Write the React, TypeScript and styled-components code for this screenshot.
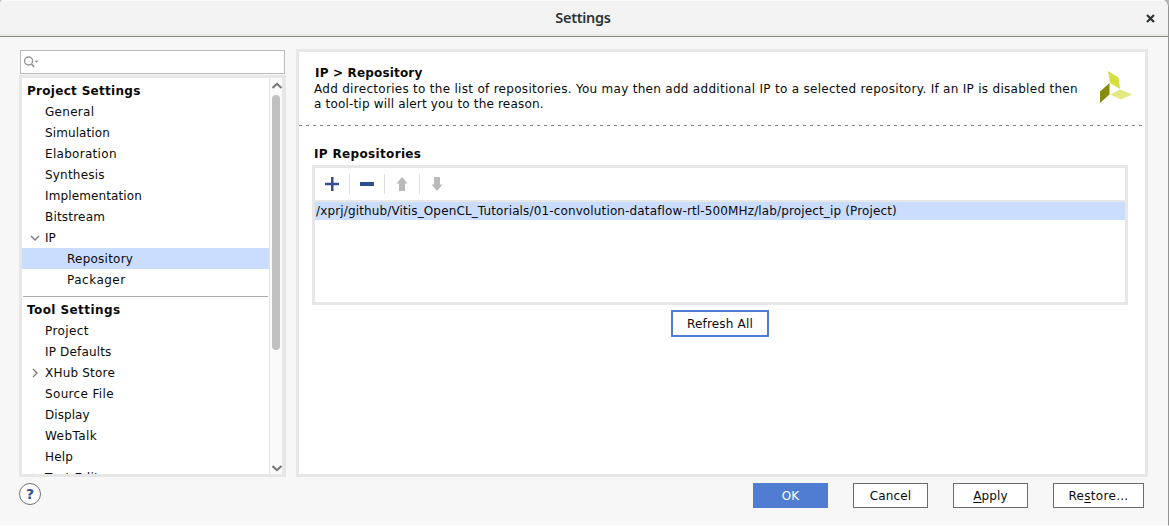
import React from 'react';
import styled, { createGlobalStyle } from 'styled-components';

const Global = createGlobalStyle`
  * { box-sizing: border-box; }
  body { margin: 0; background: #b5b5b5; overflow: hidden; }
`;

const Dialog = styled.div`
  position: relative;
  display: flex;
  flex-direction: column;
  width: 1169px;
  height: 526px;
  overflow: hidden;
  background: #f7f7f7;
  border-right: 1px solid #939393;
  border-bottom: 1px solid #fdfdfd;
  border-top-left-radius: 4px;
  border-top-right-radius: 7px;
  font: 12px 'DejaVu Sans', sans-serif;
  font-variant-ligatures: none;
  color: #0a0a0a;
  white-space: pre;
`;

const TitleBar = styled.header`
  display: flex;
  flex: none;
  align-items: center;
  height: 37px;
  padding: 0 13px 0 0;
  background: #f3f3f3;
  border-top: 1px solid #fbfbfb;
  border-bottom: 1px solid #8b8c85;
  box-shadow: inset 0 -2px 0 #e9e9e8;
`;

const Title = styled.h1`
  flex: 1;
  margin: 0;
  padding: 0 0 4px 20px;
  text-align: center;
  font: 600 14.5px/20px 'Noto Sans', sans-serif;
  letter-spacing: -0.3px;
  color: #2e3436;
`;

const Columns = styled.div`
  display: flex;
  flex: none;
  gap: 10px;
  height: 440px;
  padding: 12px 20px 0 19px;
`;

const Sidebar = styled.aside`
  display: flex;
  flex-direction: column;
  width: 267px;
  padding-top: 1px;
`;

const Search = styled.div`
  display: flex;
  flex: none;
  align-items: center;
  height: 24px;
  margin: 0 1px 1px;
  padding-left: 3px;
  background: #fff;
  border: 1px solid #b9b9b9;
`;

const TreeFrame = styled.div`
  display: flex;
  flex: none;
  height: 402px;
  border: 3px solid #e7e7e7;
  border-right-width: 4px;
  background: #fff;
`;

const Tree = styled.div`
  flex: 1;
  padding-top: 2px;
  overflow: hidden;
`;

const Row = styled.div<{ $level: number; $selected?: boolean }>`
  display: flex;
  align-items: center;
  height: 21px;
  padding-left: ${p => [5, 7, 45][p.$level]}px;
  font-weight: ${p => (p.$level === 0 ? 'bold' : 'normal')};
  background: ${p => (p.$selected ? '#cbddff' : 'transparent')};
`;

const Toggle = styled.span`
  display: flex;
  width: 16px;
  height: 12px;
`;

const Label = styled.span<{ $track?: number }>`
  letter-spacing: ${p => p.$track ?? 0}px;
`;

const Separator = styled.hr`
  height: 1px;
  margin: 6px 1px 2px;
  border: 0;
  background: #adadad;
`;

const ScrollBar = styled.div`
  display: flex;
  flex-direction: column;
  justify-content: space-between;
  width: 13px;
  padding: 2px 0 0 2px;
  border-left: 1px solid #e3e3e3;
  background: #fafafa;
`;

const Thumb = styled.div`
  width: 8px;
  height: 255px;
  margin: 3px 0 auto;
  border-radius: 4px;
  background: #c1c1c1;
`;

const Panel = styled.main`
  width: 852px;
  height: 428px;
  border: 3px solid #e7e7e7;
  background: #fff;
`;

const Intro = styled.section`
  display: flex;
  justify-content: space-between;
  height: 73px;
  padding: 13px 13px 0 15px;
`;

const Heading = styled.h2`
  margin: 0;
  padding-left: 1px;
  font-size: 12px;
  line-height: 16px;
  letter-spacing: 0.17px;
`;

const Paragraph = styled.p`
  margin: 1px 0 0;
  line-height: 15px;
`;

const Logo = styled.svg`
  margin-top: 6px;
`;

const Dashes = styled.div`
  height: 1px;
  width: 843px;
  background: repeating-linear-gradient(90deg, #858585 0 3px, transparent 3px 7px);
`;

const Repositories = styled.section`
  display: flex;
  flex-direction: column;
  align-items: center;
  padding: 21px 17px 0 13px;
`;

const SectionTitle = styled.h2`
  align-self: flex-start;
  margin: 0 0 3px 2px;
  font-size: 12px;
  line-height: 15px;
  letter-spacing: 0.34px;
`;

const Table = styled.div`
  width: 816px;
  height: 140px;
  border: 3px solid #e7e7e7;
`;

const Toolbar = styled.div`
  display: flex;
  align-items: center;
  height: 34px;
  border-bottom: 2px solid #e7e7e7;
`;

const Tool = styled.span`
  display: flex;
  align-items: center;
  justify-content: center;
  width: 35px;
  height: 20px;
  &:first-child { width: 34px; }
  & + & { border-left: 1px solid #dedede; }
`;

const Entry = styled.div`
  height: 18px;
  padding-left: 1px;
  line-height: 18px;
  background: #cbddff;
`;

const Button = styled.button<{ $kind?: 'primary' | 'focus'; $w?: number; $track?: number }>`
  width: ${p => p.$w ?? 75}px;
  height: ${p => (p.$kind === 'focus' ? 27 : 25)}px;
  margin: 0;
  padding: 0;
  border: ${p => (p.$kind === 'focus' ? '2px solid #507dd2' : p.$kind ? '1px solid #507dd2' : '1px solid #6b6b6b')};
  background: ${p => (p.$kind === 'primary' ? '#507dd2' : '#fff')};
  color: ${p => (p.$kind === 'primary' ? '#fff' : '#0a0a0a')};
  font: 12px 'DejaVu Sans', sans-serif;
  letter-spacing: ${p => p.$track ?? 0}px;
`;

const RefreshSlot = styled.div`
  margin-top: 5px;
`;

const Footer = styled.footer`
  display: flex;
  align-items: flex-start;
  gap: 25px;
  padding: 6px 24px 0 19px;
`;

const Help = styled.span`
  display: flex;
  align-items: center;
  justify-content: center;
  width: 22px;
  height: 22px;
  margin-right: auto;
  border: 1px solid #707070;
  border-radius: 50%;
  background: #fff;
  color: #304f8c;
  font: bold 14px/20px 'DejaVu Sans', sans-serif;
`;

const Mnemonic = styled.span`
  text-decoration: underline;
  text-underline-offset: 2px;
  text-decoration-thickness: 1px;
  text-decoration-skip-ink: none;
`;

const Chevron = ({ d, w = 1.6, color = '#777' }: { d: string; w?: number; color?: string }) => (
  <svg width="12" height="12" viewBox="0 0 12 12" fill="none" stroke={color} strokeWidth={w}>
    <path d={d} />
  </svg>
);

type Item = { text: string; level: number; open?: boolean; selected?: boolean; track?: number };

const projectItems: Item[] = [
  { text: 'Project Settings', level: 0, track: 0.3 },
  { text: 'General', level: 1, track: 0.28 },
  { text: 'Simulation', level: 1, track: 0.1 },
  { text: 'Elaboration', level: 1, track: 0.3 },
  { text: 'Synthesis', level: 1, track: 0.2 },
  { text: 'Implementation', level: 1, track: 0.12 },
  { text: 'Bitstream', level: 1, track: 0.2 },
  { text: 'IP', level: 1, open: true },
  { text: 'Repository', level: 2, selected: true, track: 0.24 },
  { text: 'Packager', level: 2, track: 0.5 },
];

const toolItems: Item[] = [
  { text: 'Tool Settings', level: 0, track: 0.42 },
  { text: 'Project', level: 1, track: 0.4 },
  { text: 'IP Defaults', level: 1, track: 0.16 },
  { text: 'XHub Store', level: 1, open: false, track: 0.2 },
  { text: 'Source File', level: 1, track: 0.34 },
  { text: 'Display', level: 1, track: 0.05 },
  { text: 'WebTalk', level: 1, track: 0.42 },
  { text: 'Help', level: 1, track: 0.2 },
  { text: 'Text Editor', level: 1, open: false, track: 0.3 },
];

const TreeRow = ({ item }: { item: Item }) => (
  <Row $level={item.level} $selected={item.selected}>
    {item.level === 1 && (
      <Toggle>
        {item.open !== undefined && <Chevron d={item.open ? 'M2 4l4 4 4-4' : 'M4 2l4 4-4 4'} w={1.3} />}
      </Toggle>
    )}
    <Label $track={item.track}>{item.text}</Label>
  </Row>
);

export default function App() {
  return (
    <>
      <Global />
      <Dialog>
        <TitleBar>
          <Title>Settings</Title>
          <svg width="9" height="9" viewBox="0 0 9 9" stroke="#2e3436" strokeWidth="2.2">
            <path d="M1 1l7 7M8 1L1 8" />
          </svg>
        </TitleBar>
        <Columns>
          <Sidebar>
            <Search>
              <svg width="15" height="12" viewBox="0 0 15 12" fill="none" stroke="#979797">
                <circle cx="4.6" cy="5" r="4" strokeWidth="1.4" />
                <path d="M7.5 8l2.6 2.8" strokeWidth="1.8" />
                <path d="M10.500 4.800h4l-2 2z" fill="#8f8f8f" stroke="none" />
              </svg>
            </Search>
            <TreeFrame>
              <Tree>
                {projectItems.map(i => <TreeRow key={i.text} item={i} />)}
                <Separator />
                {toolItems.map(i => <TreeRow key={i.text} item={i} />)}
              </Tree>
              <ScrollBar>
                <Chevron d="M.5 8L5 3.8 9.500 8" w={2} />
                <Thumb />
                <Chevron d="M.5 4L5 8.200 9.500 4" w={2} />
              </ScrollBar>
            </TreeFrame>
          </Sidebar>
          <Panel>
            <Intro>
              <div>
                <Heading>IP &gt; Repository</Heading>
                <Paragraph>
                  <Label $track={0.292}>Add directories to the list of repositories. You may then add additional IP to a selected repository. If an IP is disabled then</Label>
                  <br />
                  <Label $track={0.18}>a tool-tip will alert you to the reason.</Label>
                </Paragraph>
              </div>
              <Logo width="32" height="33" viewBox="0 0 32 33">
                <path d="M8 0L18.600 6.500 20 18 10 12z" fill="#d5df3d" />
                <path d="M0 20.500L9.500 12V23.500L0 32z" fill="#868c0b" />
                <path d="M10 23.500L20 18.500 32 23.500 21 28.500z" fill="#e3ea80" />
              </Logo>
            </Intro>
            <Dashes />
            <Repositories>
              <SectionTitle>IP Repositories</SectionTitle>
              <Table>
                <Toolbar>
                  <Tool>
                    <svg width="14" height="14" fill="#304f8c"><path d="M6 0h2.500v5.800H14v2.400H8.500V14H6V8.200H0V5.800h6z" /></svg>
                  </Tool>
                  <Tool>
                    <svg width="14" height="14" fill="#304f8c"><path d="M0 5h14v4H0z" /></svg>
                  </Tool>
                  <Tool>
                    <svg width="12" height="14" fill="#b9b9b9"><path d="M6 0l5.500 6.500H9V14H3V6.500H.5z" /></svg>
                  </Tool>
                  <Tool>
                    <svg width="12" height="14" fill="#b9b9b9"><path d="M6 14l5.500-6.500H9V0H3v7.500H.5z" /></svg>
                  </Tool>
                </Toolbar>
                <Entry><Label $track={0.138}>/xprj/github/Vitis_OpenCL_Tutorials/01-convolution-dataflow-rtl-500MHz/lab/project_ip (Project)</Label></Entry>
              </Table>
              <RefreshSlot>
                <Button $kind="focus" $w={98} $track={0.2}>Refresh All</Button>
              </RefreshSlot>
            </Repositories>
          </Panel>
        </Columns>
        <Footer>
          <Help>?</Help>
          <Button $kind="primary">OK</Button>
          <Button $track={0.1}>Cancel</Button>
          <Button $track={0.1}><Mnemonic>A</Mnemonic>pply</Button>
          <Button $w={91} $track={0.3}>Re<Mnemonic>s</Mnemonic>tore...</Button>
        </Footer>
      </Dialog>
    </>
  );
}
